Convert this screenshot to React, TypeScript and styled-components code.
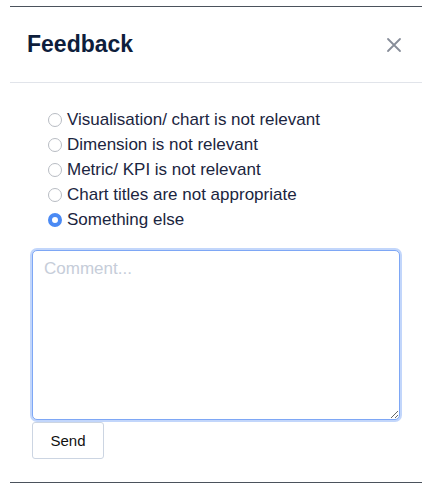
import React, { useState } from 'react';
import styled, { createGlobalStyle } from 'styled-components';

const GlobalStyle = createGlobalStyle`
  body {
    margin: 0;
    background: #ffffff;
    font-family: "Liberation Sans", Arial, Helvetica, sans-serif;
  }
`;

const Page = styled.div`
  padding: 6px 14px 0 10px;
  height: 484px;
  box-sizing: border-box;
`;

const ModalCard = styled.div`
  border-top: 1px solid #4b525c;
  border-bottom: 1px solid #4b525c;
  height: 477px;
  box-sizing: border-box;
  display: flex;
  flex-direction: column;
`;

const Header = styled.div`
  display: flex;
  align-items: center;
  justify-content: space-between;
  height: 75px;
  padding: 0 19px 0 17px;
  border-bottom: 1px solid #e1e4ea;
`;

const Title = styled.h2`
  margin: 0;
  font-size: 23px;
  font-weight: 700;
  color: #0e1e3c;
`;

const CloseButton = styled.button`
  border: none;
  background: none;
  padding: 0;
  width: 18px;
  height: 18px;
  display: flex;
  align-items: center;
  justify-content: center;
  cursor: pointer;
`;

const Body = styled.div`
  padding: 24px 20px 0 22px;
`;

const OptionList = styled.div`
  display: flex;
  flex-direction: column;
  padding-left: 16px;
  margin-bottom: 18px;
`;

const OptionRow = styled.label`
  display: flex;
  align-items: center;
  height: 25px;
  font-size: 17px;
  color: #1b2540;
  cursor: pointer;
`;

const RadioDot = styled.span<{ $checked: boolean }>`
  width: 14px;
  height: 14px;
  border-radius: 50%;
  box-sizing: border-box;
  margin-right: 5px;
  flex-shrink: 0;
  border: ${(p) => (p.$checked ? '4.5px solid #4b8af4' : '1px solid #b8bcc3')};
  background: #ffffff;
`;

const HiddenInput = styled.input`
  display: none;
`;

const CommentBox = styled.textarea`
  display: block;
  width: 368px;
  height: 170px;
  box-sizing: border-box;
  border: 1px solid #7ea7f5;
  border-radius: 5px;
  box-shadow: 0 0 0 2px #c2d6fb;
  padding: 8px 11px;
  font-family: "Liberation Sans", Arial, Helvetica, sans-serif;
  font-size: 17px;
  color: #1b2540;
  resize: vertical;
  outline: none;

  &::placeholder {
    color: #c6cdd9;
  }
`;

const SendButton = styled.button`
  margin-top: 2px;
  width: 72px;
  height: 37px;
  background: #ffffff;
  border: 1px solid #ccd5e2;
  border-radius: 3px;
  font-family: "Liberation Sans", Arial, Helvetica, sans-serif;
  font-size: 15px;
  color: #111111;
  cursor: pointer;
`;

const options = [
  'Visualisation/ chart is not relevant',
  'Dimension is not relevant',
  'Metric/ KPI is not relevant',
  'Chart titles are not appropriate',
  'Something else',
];

const App: React.FC = () => {
  const [selected, setSelected] = useState<number>(4);
  const [comment, setComment] = useState<string>('');

  return (
    <>
      <GlobalStyle />
      <Page>
        <ModalCard>
          <Header>
            <Title>Feedback</Title>
            <CloseButton aria-label="Close">
              <svg width="16" height="16" viewBox="0 0 16 16">
                <path
                  d="M2 2 L14 14 M14 2 L2 14"
                  stroke="#878d99"
                  strokeWidth="1.8"
                  strokeLinecap="round"
                />
              </svg>
            </CloseButton>
          </Header>
          <Body>
            <OptionList>
              {options.map((option, index) => (
                <OptionRow key={option}>
                  <HiddenInput
                    type="radio"
                    name="feedback"
                    checked={selected === index}
                    onChange={() => setSelected(index)}
                  />
                  <RadioDot $checked={selected === index} />
                  {option}
                </OptionRow>
              ))}
            </OptionList>
            <CommentBox
              placeholder="Comment..."
              value={comment}
              onChange={(e: React.ChangeEvent<HTMLTextAreaElement>) =>
                setComment(e.target.value)
              }
            />
            <SendButton>Send</SendButton>
          </Body>
        </ModalCard>
      </Page>
    </>
  );
};

export default App;
